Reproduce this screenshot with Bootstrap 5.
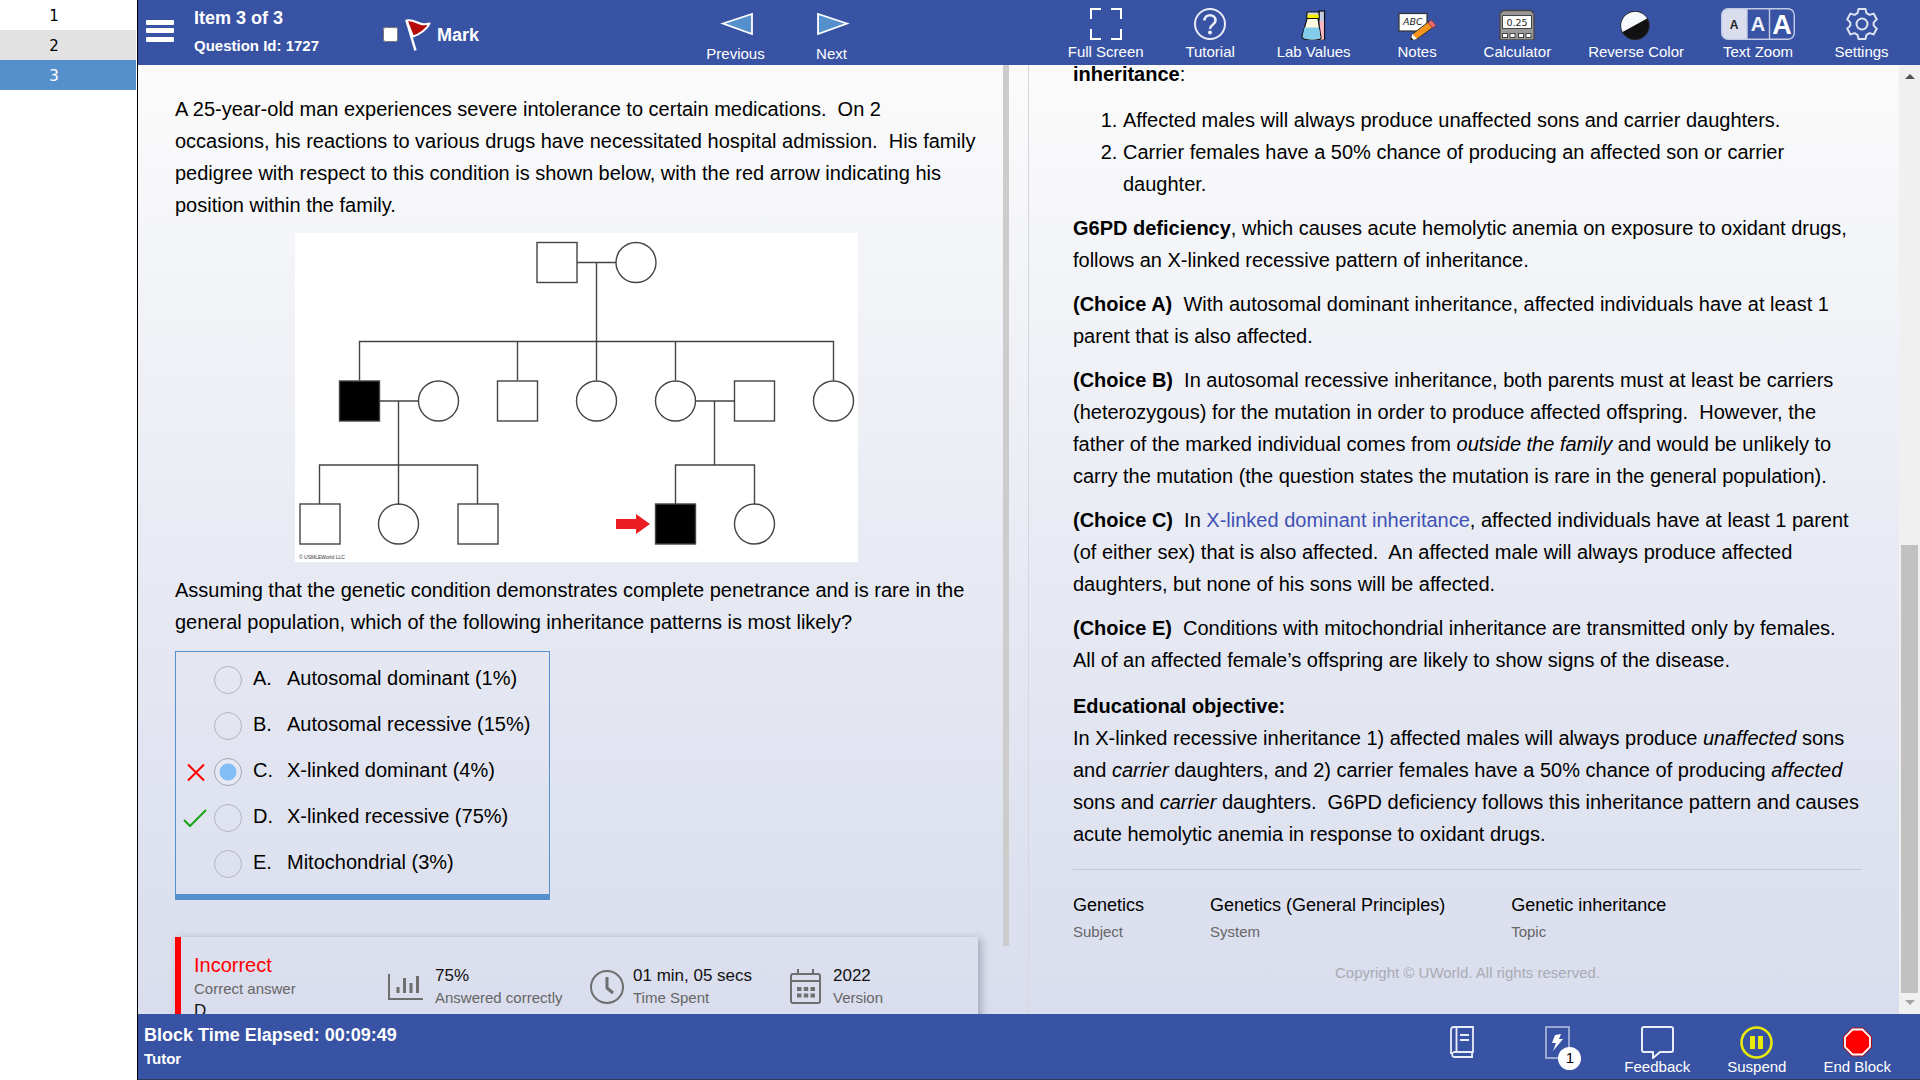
<!DOCTYPE html>
<html lang="en">
<head>
<meta charset="utf-8">
<meta name="viewport" content="width=device-width, initial-scale=1">
<title>Item 3 of 3</title>
<link href="https://cdn.jsdelivr.net/npm/bootstrap@5.3.0/dist/css/bootstrap.min.css" rel="stylesheet">
<style>
  :root { --bar: #3853a4; --accent: #5590cd; }
  body { font-family: "Liberation Sans", Arial, sans-serif; font-size: 20px; line-height: 32px; color: #000; background: #fff; }
  p { margin-bottom: 12px; }

  .item-rail { flex: 0 0 138px; border-right: 1px solid #000; padding-right: 1px; font: 15px/28px "DejaVu Sans", sans-serif; }
  .item-rail a { display: block; padding: 2px 28px 0 0; text-align: center; color: #000; text-decoration: none; }
  .item-rail li:nth-child(even) a { background: #e2e2e2; }
  .item-rail a.current { background: var(--accent) !important; color: #fff; }

  .app { min-width: 0; }
  .bar { background: var(--bar); color: #fff; flex: none; padding: 0 29px 0 8px; }
  .bar-top { height: 65px; }
  .bar-bottom { height: 66px; border-bottom: 1px solid #2c3a5c; padding-left: 6px; }
  .bar button { background: none; border: 0; padding: 0; color: inherit; }
  .bar-title { font-size: 18px; font-weight: 700; line-height: 24px; }
  .bar-sub { font-size: 15px; font-weight: 700; line-height: 24px; }
  .tool-set { gap: 37px; }
  .tool { min-width: 59px; font-size: 15px; line-height: 18px; display: flex; flex-direction: column; align-items: center; gap: 3px; white-space: nowrap; }
  .tool svg { display: block; }
  .bar-top .tool { padding-top: 8px; }
  .stepper { margin-left: 227px; padding-top: 2px; }
  .bar-bottom .tool { padding-top: 12px; line-height: 16px; gap: 0; }
  .bar-top .tool, .bar-bottom .tool { padding-left: 0; }
  .title-block { width: 189px; margin-left: 20px; padding-top: 2px; }
  .title-block .bar-title { line-height: 32px; }
  .block-time { padding-top: 9px; }
  .mark-box { width: 15px; height: 15px; margin: 0 7px 0 0; }
  .flag { margin-right: 6px; }
  .note-count { position: absolute; left: 30px; top: 33px; width: 23px; height: 23px; line-height: 22px; border-radius: 50%; background: #fff; color: #000; }

  .work { background: linear-gradient(#fbfbfb, #e7eaf3 54%, #d9dded); min-height: 0; display: grid; grid-template: minmax(0, 1fr) / minmax(0, 865fr) 25px minmax(0, 892fr); }
  .stem { overflow: hidden; padding: 28px 25px 0 37px; }
  .splitter { width: 6px; height: calc(100% - 68px); background: #ccc; }
  .explain { border-left: 1px solid #d5d7dd; }
  .explain-body { min-width: 0; overflow: hidden; padding: 0 37px 0 44px; }
  .explain-body > * { flex: none; }
  .explain-body ol { margin: 2px 0 12px; padding-left: 50px; }
  .explain-body a { color: #3f51b5; text-decoration: none; }
  .objective { padding-top: 2px; margin-bottom: 19px; }
  .rule { height: 1px; background: #c8cad2; margin-bottom: 21px; }
  .topic-set { gap: 66px; margin-bottom: 15px; }
  .big-label { font-size: 18px; line-height: 28px; }
  .small-label { font-size: 15px; line-height: 26px; color: #666; }
  .copyright { font-size: 15px; line-height: 26px; color: #a9abb2; padding-bottom: 28px; text-align: center; }

  .scroll-rail { flex: 0 0 21px; background: #f0f0f0; padding: 8px 0 6px; }
  .scroll-rail .thumb { width: 17px; flex: 448 0 0; background: #c1c1c1; }
  .scroll-rail .track { flex: 465 0 0; }

  .pedigree { display: block; margin: 0 auto 12px; width: 563px; max-width: 100%; }
  .choices { border: 1px solid var(--accent); border-bottom-width: 6px; width: 375px; padding: 5px 12px 7px 7px; margin: 13px 0 37px; }
  .choice { height: 46px; }
  .choice .verdict { width: 24px; flex: none; margin-right: 7px; }
  .choice input { appearance: none; width: 28px; height: 28px; flex: none; margin: 0 11px 0 0; border: 1px solid #b4b5be; border-radius: 50%; background: transparent; }
  .choice input:checked { border-color: #a5a6ae; background: radial-gradient(circle, #82bef3 0 8px, #e6e9f3 9px); }
  .choice label { padding-bottom: 5px; }
  .choice .letter { display: inline-block; width: 34px; }

  .result { border-left: 6px solid #f00; padding: 15px 0 12px 13px; box-shadow: 3px 2px 8px rgba(60,60,80,.35); display: grid; grid-template-columns: 194fr 202fr 200fr 188fr; }
  .result .status { color: #f00; line-height: 26px; }
  .result .small-label, .result .stat-value { line-height: 22px; white-space: nowrap; }
  .result .stat-value { font-size: 17px; color: #111; }
  .result .stat { padding-top: 13px; align-items: flex-start; }
</style>
<script src="https://cdn.jsdelivr.net/npm/bootstrap@5.3.0/dist/js/bootstrap.bundle.min.js"></script>
</head>
<body class="vh-100 d-flex overflow-hidden">

<nav class="item-rail" aria-label="Items">
  <ul class="list-unstyled m-0">
    <li><a href="#">1</a></li>
    <li><a href="#">2</a></li>
    <li><a href="#" class="current" aria-current="true">3</a></li>
  </ul>
</nav>

<div class="app flex-grow-1 d-flex flex-column">

  <header class="bar bar-top d-flex align-items-start">
    <button type="button" class="align-self-center" aria-label="Menu">
      <svg class="d-block" width="28" height="25" fill="#fff"><rect y="0" width="28" height="5" rx="1"/><rect y="8" width="28" height="5" rx="1"/><rect y="17" width="28" height="5" rx="1"/></svg>
    </button>
    <div class="title-block">
      <div class="bar-title">Item 3 of 3</div>
      <div class="bar-sub">Question Id: 1727</div>
    </div>
    <div class="d-flex align-items-center align-self-center mt-1">
      <input type="checkbox" id="markItem" class="mark-box">
      <label for="markItem" class="bar-title d-flex align-items-center">
        <svg class="flag" width="26" height="32" viewBox="0 0 26 32"><path d="M1.500 1.500C6 0 11 3 15 4.500c3 1.200 6 1 9.500 0C22 10 15 15.500 8 17.500z" fill="#b50a0a" stroke="#fff" stroke-width="2" stroke-linejoin="round"/><path d="M1.500 1.500 10.500 31.500" stroke="#fff" stroke-width="2.500"/></svg>
        Mark
      </label>
    </div>
    <div class="stepper tool-set d-flex">
      <button type="button" class="tool"><svg width="36" height="32"><path d="M5 13.500 34 4v20z" fill="#5590cd" stroke="#fff" stroke-width="1.800"/></svg>Previous</button>
      <button type="button" class="tool"><svg width="36" height="32"><path d="M33 13.500 4 4v20z" fill="#5590cd" stroke="#fff" stroke-width="1.800"/></svg>Next</button>
    </div>
    <div class="tool-set d-flex ms-auto">
      <button type="button" class="tool">
        <svg width="32" height="32" fill="none" stroke="#fff" stroke-width="2"><path d="M1 11V1h10M21 1h10v10M31 21v10H21M11 31H1V21"/></svg>Full Screen</button>
      <button type="button" class="tool">
        <svg width="34" height="32" fill="none" stroke="#e9edf8" stroke-width="2"><circle cx="17" cy="16" r="15"/><path d="M11.500 12.500c0-7 11-7 11 0 0 4.500-5.500 4-5.500 8.500" stroke-width="2.600"/><circle cx="17" cy="24.500" r="1" fill="#fff"/></svg>Tutorial</button>
      <button type="button" class="tool">
        <svg width="26" height="32" viewBox="0 0 26 32" stroke="#111" stroke-width="1.200"><rect x="18" y="3" width="5.500" height="29" fill="#c4cde6"/><rect x="18.600" y="13" width="4.300" height="18.400" fill="#fbb6c4" stroke="none"/><path d="M6 4h12v7H6z" fill="#d8dcea"/><path d="M6.500 6.500h11v4h-11z" fill="#f5ee00" stroke="none"/><path d="M6 10.500h11l3 19c0 2.500-4 2.500-8.500 2.500S1 31.500 1 28.500z" fill="#fbfae0"/><path d="M3.500 19.500h14.500l1.400 10c-.4 1.700-4 1.900-8 1.900s-9.500-.4-9.800-2.900z" fill="#83cdea" stroke="none"/></svg>Lab Values</button>
      <button type="button" class="tool">
        <svg width="40" height="32" viewBox="0 0 40 32"><rect x="2" y="5.500" width="28" height="17.500" fill="#fff" stroke="#333" stroke-width="1.200"/><text x="6" y="17" font-family="DejaVu Sans" font-style="italic" font-size="9.500" fill="#222">ABC</text><path d="m13 32.500 2.500-6.500L32 13.500l4.500 5.500L20 31z" fill="#f6951e" stroke="#333" stroke-width="1"/><path d="m13 32.500 2.500-6.500 4.500 5z" fill="#fff"/><path d="m13 32.500 1.200-3.200 2.200 2.400z" fill="#111"/><path d="m31 14.500 3.500-2.500 4.500 5.500-3.500 2.500z" fill="#ef6a70" stroke="#7b3038" stroke-width=".8"/></svg>Notes</button>
      <button type="button" class="tool">
        <svg width="36" height="32" viewBox="0 0 36 32"><path d="M4 2.500h28l3 3V32H1V5.500z" fill="#999" stroke="#444" stroke-width="1.300"/><rect x="3.500" y="7.500" width="29" height="13" fill="#fff" stroke="#444"/><text x="18" y="17.500" text-anchor="middle" font-family="DejaVu Sans" font-size="9.500" fill="#222">0.25</text><g fill="#fff" stroke="#444"><rect x="3.500" y="25.500" width="5" height="4"/><rect x="11" y="25.500" width="5" height="4"/><rect x="19.500" y="25.500" width="5" height="4"/><rect x="27" y="25.500" width="5" height="4"/></g></svg>Calculator</button>
      <button type="button" class="tool">
        <svg width="32" height="32"><circle cx="15" cy="17.500" r="14" fill="#111" stroke="#222" stroke-width="1.200"/><path d="M2.600 24A14 14 0 0 1 27.100 10.500z" fill="#f8f9fc"/></svg>Reverse Color</button>
      <button type="button" class="tool">
        <svg width="74" height="32" viewBox="0 0 74 32"><path d="M7 .500h19v31H7a6.500 6.500 0 0 1-6.500-6.500V7A6.500 6.500 0 0 1 7 .500z" fill="#d9ddee"/><rect x=".7" y=".7" width="72.600" height="30.600" rx="6.500" fill="none" stroke="#c2cae4" stroke-width="1.400"/><path d="M26 1v30M48.500 1v30" stroke="#c2cae4" stroke-width="1.400"/><g font-family="Liberation Sans" font-weight="700" text-anchor="middle"><text x="13" y="21" font-size="12" fill="#222">A</text><text x="37" y="23" font-size="20" fill="#eef1fa">A</text><text x="61" y="26" font-size="27" fill="#fff">A</text></g></svg>Text Zoom</button>
      <button type="button" class="tool">
        <svg width="32" height="32" viewBox="0 0 32 32" fill="none" stroke="#dfe4f4" stroke-width="2" stroke-linejoin="round"><path d="M12.500 1h7l1 4.200 3 1.700 4.100-1.300 3.200 5.800-3.100 3v3.200l3.100 3-3.200 5.800-4.100-1.300-3 1.700-1 4.200h-7l-1-4.200-3-1.700-4.100 1.300-3.200-5.800 3.100-3v-3.200l-3.100-3 3.200-5.800 4.100 1.300 3-1.700z"/><circle cx="16" cy="16" r="5.500"/></svg>Settings</button>
    </div>
  </header>

  <main class="work flex-grow-1">
    <section class="stem">
      <p>A 25-year-old man experiences severe intolerance to certain medications.&nbsp; On 2 occasions, his reactions to various drugs have necessitated hospital admission.&nbsp; His family pedigree with respect to this condition is shown below, with the red arrow indicating his position within the family.</p>

      <svg class="pedigree" viewBox="0 0 563 329" role="img" aria-label="Family pedigree">
        <rect width="563" height="329" fill="#fff"/>
        <g fill="none" stroke="#444" stroke-width="1.400">
          <path d="M282 29.500h39M301.500 29.500v118M64.500 147.500V108.500h474v39M222.500 108.500v39M380.500 108.500v39"/>
          <path d="M84 168h39M103.500 168v104M24.500 271v-39h158v39M400 168h39M419.500 168v64M380.500 271v-39h79v39"/>
          <rect x="242" y="9.500" width="40" height="40"/><circle cx="341" cy="29.500" r="20"/>
          <rect x="44.500" y="148" width="40" height="40" fill="#000"/><circle cx="143.500" cy="168" r="20"/>
          <rect x="202.500" y="148" width="40" height="40"/><circle cx="301.500" cy="168" r="20"/>
          <circle cx="380.500" cy="168" r="20"/><rect x="439.500" y="148" width="40" height="40"/>
          <circle cx="538.500" cy="168" r="20"/>
          <rect x="5" y="271" width="40" height="40"/><circle cx="103.500" cy="291" r="20"/><rect x="163" y="271" width="40" height="40"/>
          <rect x="360.500" y="271" width="40" height="40" fill="#000"/><circle cx="459.500" cy="291" r="20"/>
        </g>
        <path d="M321 286h20v-5l14 10-14 10v-5h-20z" fill="#ec1c24"/>
        <text x="4" y="326" font-family="Liberation Sans" font-size="5" fill="#333">© USMLEWorld LLC</text>
      </svg>

      <p class="mb-0">Assuming that the genetic condition demonstrates complete penetrance and is rare in the general population, which of the following inheritance patterns is most likely?</p>

      <div class="choices">
        <div class="choice d-flex align-items-center"><span class="verdict"></span><input type="radio" name="answer" id="cA"><label for="cA"><span class="letter">A.</span>Autosomal dominant (1%)</label></div>
        <div class="choice d-flex align-items-center"><span class="verdict"></span><input type="radio" name="answer" id="cB"><label for="cB"><span class="letter">B.</span>Autosomal recessive (15%)</label></div>
        <div class="choice d-flex align-items-center"><svg class="verdict" height="24" stroke="#f00" stroke-width="2"><path d="m5 4.500 16 16M21 4.500l-16 16"/></svg><input type="radio" name="answer" id="cC" checked><label for="cC"><span class="letter">C.</span>X-linked dominant (4%)</label></div>
        <div class="choice d-flex align-items-center"><svg class="verdict" height="24" fill="none" stroke="#18a318" stroke-width="2"><path d="m1 14 6 6L23 4"/></svg><input type="radio" name="answer" id="cD"><label for="cD"><span class="letter">D.</span>X-linked recessive (75%)</label></div>
        <div class="choice d-flex align-items-center"><span class="verdict"></span><input type="radio" name="answer" id="cE"><label for="cE"><span class="letter">E.</span>Mitochondrial (3%)</label></div>
      </div>

      <div class="result">
        <div>
          <div class="status">Incorrect</div>
          <div class="small-label">Correct answer</div>
          <div class="stat-value">D</div>
        </div>
        <div class="stat d-flex">
          <svg width="47" height="38" fill="none" stroke="#6f6f6f" stroke-width="2"><path d="M1 9v25h34"/><path d="M10 22v6M16.500 13v15M23 18v10M29.500 11v17" stroke-width="3"/></svg>
          <div><div class="stat-value">75%</div><div class="small-label">Answered correctly</div></div>
        </div>
        <div class="stat d-flex">
          <svg width="43" height="40" fill="none" stroke="#6f6f6f" stroke-width="2"><circle cx="17" cy="22" r="16"/><path d="M17 12v11l6 5" stroke-width="3"/></svg>
          <div><div class="stat-value">01 min, 05 secs</div><div class="small-label">Time Spent</div></div>
        </div>
        <div class="stat d-flex">
          <svg width="43" height="40" fill="none" stroke="#6f6f6f" stroke-width="2"><rect x="1" y="9" width="29" height="29" rx="2"/><path d="M1 16h29M8 4v5M23 4v5"/><path d="M7 24h18M7 30.500h18" stroke-width="4" stroke-dasharray="4.500 2.250"/></svg>
          <div><div class="stat-value">2022</div><div class="small-label">Version</div></div>
        </div>
      </div>
    </section>

    <div class="splitter"></div>

    <section class="explain d-flex">
      <div class="explain-body flex-grow-1 d-flex flex-column justify-content-end">
        <p><strong>inheritance</strong>:</p>
        <ol>
          <li>Affected males will always produce unaffected sons and carrier daughters.</li>
          <li>Carrier females have a 50% chance of producing an affected son or carrier daughter.</li>
        </ol>
        <p><strong>G6PD deficiency</strong>, which causes acute hemolytic anemia on exposure to oxidant drugs, follows an X-linked recessive pattern of inheritance.</p>
        <p><strong>(Choice A)</strong>&nbsp; With autosomal dominant inheritance, affected individuals have at least 1 parent that is also affected.</p>
        <p><strong>(Choice B)</strong>&nbsp; In autosomal recessive inheritance, both parents must at least be carriers (heterozygous) for the mutation in order to produce affected offspring.&nbsp; However, the father of the marked individual comes from <em>outside the family</em> and would be unlikely to carry the mutation (the question states the mutation is rare in the general population).</p>
        <p><strong>(Choice C)</strong>&nbsp; In <a href="#">X-linked dominant inheritance</a>, affected individuals have at least 1 parent (of either sex) that is also affected.&nbsp; An affected male will always produce affected daughters, but none of his sons will be affected.</p>
        <p><strong>(Choice E)</strong>&nbsp; Conditions with mitochondrial inheritance are transmitted only by females.&nbsp; All of an affected female’s offspring are likely to show signs of the disease.</p>
        <p class="objective"><strong>Educational objective:</strong><br>In X-linked recessive inheritance 1) affected males will always produce <em>unaffected</em> sons and <em>carrier</em> daughters, and 2) carrier females have a 50% chance of producing <em>affected</em> sons and <em>carrier</em> daughters.&nbsp; G6PD deficiency follows this inheritance pattern and causes acute hemolytic anemia in response to oxidant drugs.</p>
        <div class="rule"></div>
        <div class="topic-set d-flex">
          <div><div class="big-label">Genetics</div><div class="small-label">Subject</div></div>
          <div><div class="big-label">Genetics (General Principles)</div><div class="small-label">System</div></div>
          <div><div class="big-label">Genetic inheritance</div><div class="small-label">Topic</div></div>
        </div>
        <div class="copyright">Copyright © UWorld. All rights reserved.</div>
      </div>
      <div class="scroll-rail d-flex flex-column align-items-center" aria-hidden="true">
        <svg width="10" height="8"><path d="M0 6h10L5 1z" fill="#505050"/></svg>
        <div class="track"></div>
        <div class="thumb"></div>
        <svg width="10" height="15"><path d="M0 7h10l-5 5z" fill="#a3a3a3"/></svg>
      </div>
    </section>
  </main>

  <footer class="bar bar-bottom d-flex align-items-start">
    <div class="block-time">
      <div class="bar-title">Block Time Elapsed: 00:09:49</div>
      <div class="bar-sub">Tutor</div>
    </div>
    <div class="tool-set d-flex ms-auto">
      <button type="button" class="tool" aria-label="Notebook">
        <svg width="24" height="32" fill="none" stroke="#e9edf8" stroke-width="1.800"><path d="M1 28V4a3 3 0 0 1 3-3h19v25H4a2.600 2.600 0 0 0 0 5h19M22 26v5M6.500 1v25"/><path d="M10 9h9M10 14h9" stroke-width="2.200"/></svg></button>
      <button type="button" class="tool position-relative" aria-label="Flashcards">
        <svg width="25" height="33" fill="none" stroke="#b9c3e2" stroke-width="1.500"><rect x="1" y="1" width="23" height="31"/><path d="m10 9 6-1-2 5h4L8 25l3-8H7z" fill="#fff" stroke="none"/></svg><span class="note-count">1</span></button>
      <button type="button" class="tool"><svg width="33" height="33" fill="none" stroke="#e9edf8" stroke-width="2"><path d="M3 1h27q2 0 2 2v21q0 2-2 2H19l-7 6v-6H3q-2 0-2-2V3q0-2 2-2z"/></svg>Feedback</button>
      <button type="button" class="tool"><svg width="33" height="33"><circle cx="16.500" cy="16.500" r="15" fill="none" stroke="#e8ea0a" stroke-width="2.600"/><path d="M10 10h5v13h-5zM18 10h5v13h-5z" fill="#e8ea0a"/></svg>Suspend</button>
      <button type="button" class="tool"><svg width="31" height="33"><path d="M10 1.500h11l9 9v11l-9 9H10l-9-9v-11z" fill="#a80f1c"/><path d="M10.500 3.500h10l7.500 7.500v10l-7.500 7.500h-10L3 21V11z" fill="#f00" stroke="#fff" stroke-width="1.800"/></svg>End Block</button>
    </div>
  </footer>
</div>
</body>
</html>
